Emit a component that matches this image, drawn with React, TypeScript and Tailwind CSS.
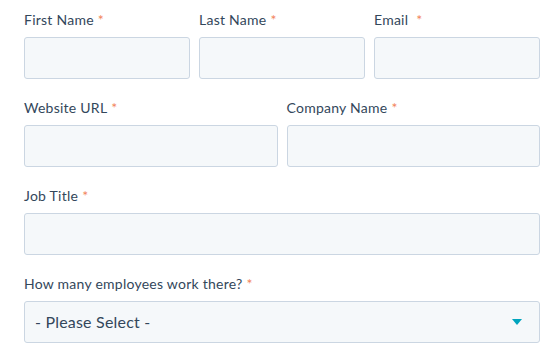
import React from 'react';

const Label = ({ text, wide = false }: { text: string; wide?: boolean }) => (
  <label className="block h-5 text-[14px] leading-5 tracking-[0.25px] text-[#33475b]">
    {text}
    <span className={`text-[#f2845b] ${wide ? 'ml-[8px]' : 'ml-[4px]'}`}>*</span>
  </label>
);

const Input = () => (
  <div className="mt-[7px] h-[42px] w-full rounded-[3px] border border-[#cbd6e2] bg-[#f5f8fa]" />
);

const Field = ({ label, wide = false }: { label: string; wide?: boolean }) => (
  <div>
    <Label text={label} wide={wide} />
    <Input />
  </div>
);

export default function App() {
  return (
    <div className="min-h-[356px] bg-white pl-6 pt-[10px]" style={{ fontFamily: 'Lato, "Open Sans", sans-serif' }}>
      <div className="flex w-[516px] flex-col gap-[19px]">
        {/* Row 1 */}
        <div className="grid grid-cols-3 gap-x-[9px]">
          <Field label="First Name" />
          <Field label="Last Name" />
          <Field label="Email" wide />
        </div>

        {/* Row 2 */}
        <div className="grid grid-cols-2 gap-x-[9px]">
          <Field label="Website URL" />
          <Field label="Company Name" />
        </div>

        {/* Row 3 */}
        <Field label="Job Title" />

        {/* Row 4 */}
        <div>
          <Label text="How many employees work there?" />
          <div className="mt-[7px] flex h-[42px] w-full items-center justify-between rounded-[3px] border border-[#cbd6e2] bg-[#f5f8fa] pl-[10px] pr-[17px]">
            <span className="text-[16px] tracking-[0.2px] text-[#33475b]">- Please Select -</span>
            <svg width="10" height="6" viewBox="0 0 10 6">
              <path d="M0 0 H10 L5 6 Z" fill="#00a4bd" />
            </svg>
          </div>
        </div>
      </div>
    </div>
  );
}
